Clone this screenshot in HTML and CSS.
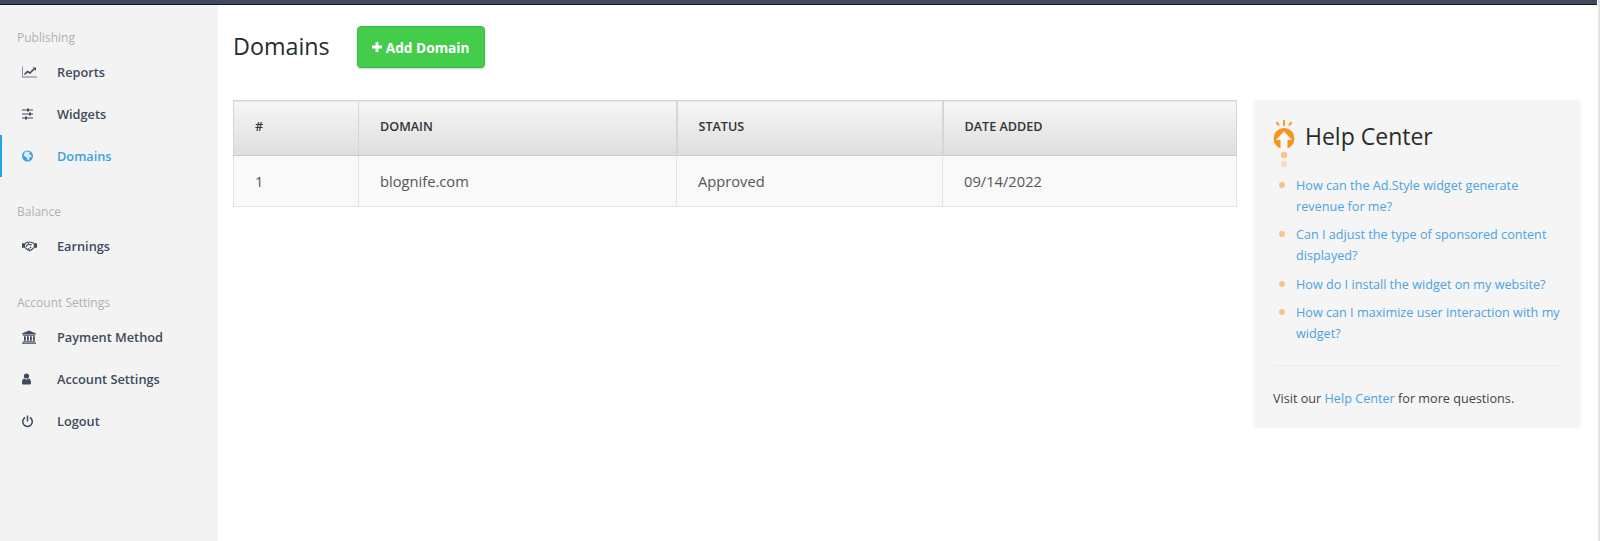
FILE: index.html
```html
<!DOCTYPE HTML>
<html>

<head>
    <meta charset="utf-8">
    <title>Domains</title>
    <link rel="stylesheet" href="styles.css">
</head>

<body>
    <div class="page">
        <div class="topbar"></div>
        <div class="wrap">
            <div class="sidebar">
                <div class="nav-label">Publishing</div>
                <a href="#" class="nav-item">
                    <svg class="nav-icon" viewBox="0 0 15 14"><path d="M0 1.500h.8v10H15v1H0z" opacity=".7"/><path d="M2.500 9.500 5.500 6.500 8 8l4-4" fill="none" stroke="currentColor" stroke-width="1.600"/><path d="M10.500 2.500H14V6z"/></svg>
                    Reports
                </a>
                <a href="#" class="nav-item">
                    <svg class="nav-icon" viewBox="0 0 15 14"><path d="M0 2.500h11v1H0zM0 6.500h11v1H0zM0 10.500h11v1H0z"/><path d="M5 1.500h2v3H5zM7 5.500h2v3H7zM3 9.500h2v3H3z"/></svg>
                    Widgets
                </a>
                <a href="#" class="nav-item nav-item-on">
                    <svg class="nav-icon" viewBox="0 0 15 14"><circle cx="5.500" cy="7" r="5.500"/><path d="M3 3 5 2.500 8 3 7 5l2 1 1 1.500-2 .5-1 2.500-1.500 1L5 9 3 7.500 1.500 6z" fill="#d9ecf8"/></svg>
                    Domains
                </a>

                <div class="nav-label nav-label-next">Balance</div>
                <a href="#" class="nav-item">
                    <svg class="nav-icon" viewBox="0 0 17 14"><path d="M0 4h2.500v5H0zM14.500 4H17v5h-2.500z"/><path d="M3 4.500 6 2.800h5L14 4.500v4L10.500 11.500l-2 .7-2-.9L3 8.500z" fill="none" stroke="currentColor" stroke-width="1.300"/><path d="M4.500 7.800 7.500 4.500l2 1.500 1.500-1M7 9.500l1.500 1.500M9 8l1.500 1.500" fill="none" stroke="currentColor" stroke-width="1.200"/></svg>
                    Earnings
                </a>

                <div class="nav-label nav-label-next nav-label-last">Account Settings</div>
                <a href="#" class="nav-item">
                    <svg class="nav-icon" viewBox="0 0 15 14"><path d="M7 .5 14 3.500v1H0v-1zM1 5h12v.8H1zM2 6.200h1.800v4.600H2zM5 6.200h1.800v4.600H5zM8 6.200h1.800v4.600H8zM11 6.200h1.800v4.600H11zM1 11.200h12v.9H1zM0 12.500h14v1.200H0z"/></svg>
                    Payment Method
                </a>
                <a href="#" class="nav-item">
                    <svg class="nav-icon" viewBox="0 0 15 14"><circle cx="4.500" cy="4" r="2.600"/><path d="M2 6.500 4.500 7.800 7 6.500c1.300.4 2 2 2 4.500 0 1-.6 1.500-1.500 1.500h-6C.6 12.500 0 12 0 11c0-2.500.7-4.100 2-4.500z"/></svg>
                    Account Settings
                </a>
                <a href="#" class="nav-item">
                    <svg class="nav-icon" viewBox="0 0 15 14"><path d="M4.750 1.500h1.500v6h-1.500z"/><path d="M3 3.500a4.800 4.800 0 1 0 5 0" fill="none" stroke="currentColor" stroke-width="1.500"/></svg>
                    Logout
                </a>
            </div>

            <div class="content">
                <div class="page-head">
                    <h1>Domains</h1>
                    <a href="#" class="btn-add">
                        <svg class="btn-plus" viewBox="0 0 10 10"><path d="M3.600 0h2.800v3.600H10v2.800H6.400V10H3.600V6.400H0V3.600h3.600z"/></svg>
                        Add Domain
                    </a>
                </div>

                <div class="columns">
                    <table class="domains">
                        <thead>
                            <tr>
                                <th class="col-num">#</th>
                                <th class="col-domain">Domain</th>
                                <th class="col-status">Status</th>
                                <th class="col-date">Date Added</th>
                            </tr>
                        </thead>
                        <tbody>
                            <tr>
                                <td>1</td>
                                <td>blognife.com</td>
                                <td>Approved</td>
                                <td>09/14/2022</td>
                            </tr>
                        </tbody>
                    </table>

                    <div class="help">
                        <div class="help-head">
                            <svg class="help-icon" viewBox="0 0 22 49">
                                <path d="M11 1v6M3.500 3l2.500 3.500M18.500 3 16 6.500" stroke="#f7931e" stroke-width="1.800" fill="none"/>
                                <circle cx="11" cy="19.500" r="10.500" fill="#f7931e"/>
                                <path d="M11 12.500 3 21h4.500v10h7V21H19z" fill="#f8f8f8"/>
                                <circle cx="11" cy="36" r="3.200" fill="#f8c48c"/>
                                <circle cx="11" cy="45" r="3.200" fill="#f9dcc0"/>
                            </svg>
                            <h3>Help Center</h3>
                        </div>
                        <ul class="help-list">
                            <li><a href="#">How can the Ad.Style widget generate revenue for me?</a></li>
                            <li><a href="#">Can I adjust the type of sponsored content displayed?</a></li>
                            <li><a href="#">How do I install the widget on my website?</a></li>
                            <li><a href="#">How can I maximize user interaction with my widget?</a></li>
                        </ul>
                        <p class="help-foot">Visit our <a href="#">Help Center</a> for more questions.</p>
                    </div>
                </div>
            </div>
        </div>
    </div>
    <div class="edge"></div>
</body>

</html>
```

FILE: styles.css
```css
html, body {
    height: 100%;
}
body {
    margin: 0;
    font-family: "Open Sans", sans-serif;
    color: #333;
    background: #FFF;
    display: flex;
    overflow: hidden;
}
a {
    text-decoration: none;
}

.page {
    flex: 1;
    min-width: 0;
    display: flex;
    flex-direction: column;
}
.edge {
    width: 2px;
    flex: none;
    border-left: 1px solid #FFF;
    background: #e2e2e2;
}

.topbar {
    height: 4px;
    background: #3f4a5c;
    border-bottom: 1px solid #0d1a33;
    flex: none;
}
.wrap {
    flex: 1;
    display: flex;
    min-height: 0;
}

.sidebar {
    width: 218px;
    flex: none;
    background: #f3f3f3;
    padding-top: 23px;
    box-sizing: border-box;
}
.nav-label {
    font-size: 12px;
    line-height: 20px;
    height: 20px;
    margin-bottom: 3px;
    padding-left: 17px;
    color: #b0b0b0;
}
.nav-label-next {
    margin-top: 25px;
}
.nav-label-last {
    margin-top: 26px;
}
.nav-item {
    display: flex;
    align-items: center;
    height: 42px;
    padding-left: 22px;
    font-size: 12.75px;
    font-weight: 600;
    color: #3f4a5c;
    box-sizing: border-box;
}
.nav-icon {
    width: 15px;
    height: 14px;
    margin-right: 20px;
    fill: currentColor;
    flex: none;
    overflow: visible;
}
.nav-item-on {
    color: #3ba1e0;
    border-left: 2px solid #1fa5e8;
    padding-left: 20px;
}

.content {
    flex: 1;
    min-width: 0;
    padding: 20px 16px 0 15px;
}
.page-head {
    display: flex;
    align-items: center;
    height: 44px;
}
h1 {
    margin: 0 27px 3px 0;
    font-size: 23.3px;
    font-weight: 400;
    color: #2b2b2b;
}
.btn-add {
    display: flex;
    align-items: center;
    height: 42px;
    padding: 0 14px;
    box-sizing: border-box;
    background: #43cd4b;
    border: 1px solid #38bd41;
    border-radius: 4px;
    box-shadow: 0 1px 2px rgba(0, 0, 0, .2);
    color: #FFF;
    font-size: 13.7px;
    font-weight: 700;
}
.btn-plus {
    width: 10px;
    height: 10px;
    margin-right: 4px;
    fill: #FFF;
}

.columns {
    display: flex;
    align-items: flex-start;
    gap: 16px;
    margin-top: 31px;
}

.domains {
    flex: 1;
    border-collapse: collapse;
    table-layout: fixed;
    min-width: 0;
}
.domains th, .domains td {
    text-align: left;
    padding: 0 0 0 21px;
    color: #555;
    box-sizing: border-box;
}
.domains th {
    height: 55px;
    padding-bottom: 3px;
    font-size: 12.6px;
    font-weight: 600;
    text-transform: uppercase;
    color: #333;
    background: linear-gradient(#f6f6f6, #dedede);
    border: 1px solid #d6d6d6;
    border-bottom-color: #ccc;
}
.domains td {
    height: 51px;
    font-size: 14.7px;
    background: #f9f9f9;
    border: 1px solid #e4e4e4;
}
.domains .col-status, .domains .col-date {
    border-left-width: 2px;
}
.col-num {
    width: 125px;
}
.col-domain {
    width: 318px;
}
.col-status {
    width: 266px;
}

.help {
    width: 328px;
    height: 328px;
    flex: none;
    box-sizing: border-box;
    padding: 20px 20px 0;
    background: #f5f5f5;
    border-radius: 4px;
    font-size: 12.65px;
}
.help-head {
    display: flex;
    align-items: center;
    height: 31px;
}
.help-head h3 {
    margin: 0;
    font-size: 23px;
    font-weight: 400;
    color: #2b2b2b;
}
.help-icon {
    width: 22px;
    height: 49px;
    margin-right: 10px;
    margin-top: 16px;
    flex: none;
}
.help-list {
    list-style: none;
    margin: 24px 0 0;
    padding: 0 0 0 23px;
}
.help-list li {
    position: relative;
    line-height: 21px;
    margin-bottom: 7.4px;
}
.help-list li::before {
    content: "";
    position: absolute;
    left: -17px;
    top: 7px;
    width: 6px;
    height: 6px;
    border-radius: 50%;
    background: #f8c48c;
}
.help-list a, .help-foot a {
    color: #4ba3e3;
}
.help-foot {
    margin: 21px 0 0;
    padding-top: 22px;
    line-height: 21px;
    border-top: 1px solid #ececec;
    color: #444;
}
```
